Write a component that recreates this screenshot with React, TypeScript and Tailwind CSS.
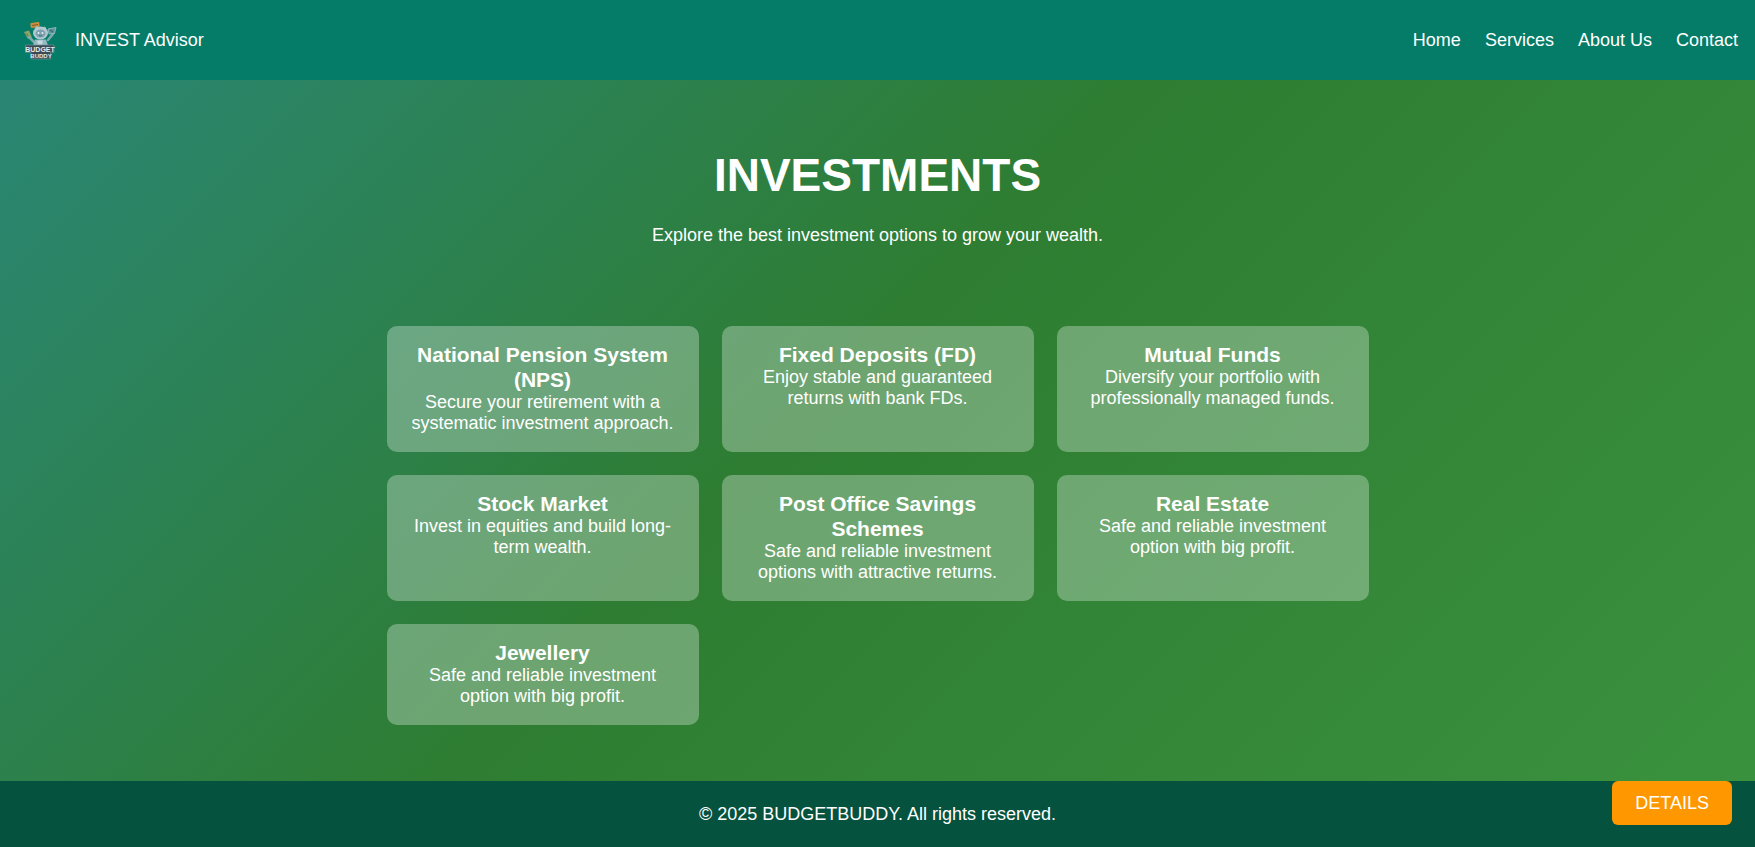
const links = ["Home", "Services", "About Us", "Contact"];

const options = [
  { title: "National Pension System (NPS)", text: "Secure your retirement with a systematic investment approach." },
  { title: "Fixed Deposits (FD)", text: "Enjoy stable and guaranteed returns with bank FDs." },
  { title: "Mutual Funds", text: "Diversify your portfolio with professionally managed funds." },
  { title: "Stock Market", text: "Invest in equities and build long-term wealth." },
  { title: "Post Office Savings Schemes", text: "Safe and reliable investment options with attractive returns." },
  { title: "Real Estate", text: "Safe and reliable investment option with big profit." },
  { title: "Jewellery", text: "Safe and reliable investment option with big profit." },
];

function Logo() {
  return (
    <svg viewBox="0 0 46 46" className="size-[46px]" role="img" aria-label="Budget Buddy">
      <rect x="13.5" y="5.5" width="9" height="5" rx="1" fill="#c98f3e" transform="rotate(-7 18 8)" />
      <path d="M15 8.5l6-1" stroke="#7d5a2d" strokeWidth="1" />
      <path d="M7 15l5-1.5 3 7-4 1.5z" fill="#8fa565" />
      <path d="M9 16.5l3 3" stroke="#4d7052" strokeWidth="1" />
      <path d="M12 20l5 5M31 23l5-6" stroke="#7fa9ae" strokeWidth="2.5" strokeLinecap="round" />
      <path d="M31 12l8-1.5-1.5 6-5.5.5z" fill="#5b929b" stroke="#9fc0c2" strokeWidth=".8" />
      <path d="M33 13l3 2" stroke="#275f68" strokeWidth="1" />
      <path d="M18 12l1.5-2.5 3 1.5M25 11l3-1 1 3" fill="#a5c4ca" stroke="#a5c4ca" />
      <ellipse cx="23.5" cy="16" rx="7.5" ry="6.5" fill="#b0cad0" />
      <ellipse cx="23.5" cy="16.5" rx="5" ry="4" fill="#7f9fb0" />
      <circle cx="21.5" cy="16" r="1" fill="#e0f1f1" />
      <circle cx="25.5" cy="16" r="1" fill="#e0f1f1" />
      <path d="M22 18.5q1.5 1 3 0" stroke="#385f70" strokeWidth=".8" fill="none" />
      <path d="M18 22.5h11l2 6H16z" fill="#94b8c1" />
      <path d="M20 23.5h6l-1 4h-4z" fill="#c5d8db" />
      <path d="M8.5 28H37v7.5h-3.5V42H14v-6.5H8.500z" fill="#3b4a55" stroke="#7d989f" strokeWidth=".6" />
      <text x="23" y="34.5" textAnchor="middle" fontFamily="Liberation Sans, sans-serif" fontWeight="700" fontSize="7" fill="#e6eced">BUDGET</text>
      <text x="24" y="41" textAnchor="middle" fontFamily="Liberation Sans, sans-serif" fontWeight="700" fontSize="6" fill="#e6eced">BUDDY</text>
    </svg>
  );
}

export default function App() {
  return (
    <div className="flex min-h-screen flex-col bg-[linear-gradient(135deg,#2a8779_0%,#2e7d32_47%,#3a923e_100%)] font-['Liberation_Sans',Arial,sans-serif] text-[18px] leading-[21px] text-white">
      <header className="flex h-20 items-center justify-between bg-[#047c68] px-[17px]">
        <div className="flex items-center gap-3">
          <Logo />
          <span>INVEST Advisor</span>
        </div>
        <nav aria-label="Main" className="flex gap-6">
          {links.map((label) => (
            <a key={label} href="#">{label}</a>
          ))}
        </nav>
      </header>

      <main className="flex grow flex-col items-center">
        <section className="px-6 pt-[69px] text-center">
          <h1 className="text-[46px] leading-[52px] font-bold">INVESTMENTS</h1>
          <p className="mt-6">Explore the best investment options to grow your wealth.</p>
        </section>
        <section
          aria-label="Investment options"
          className="grid w-full max-w-[1028px] gap-[23px] px-[23px] pt-20 pb-14 sm:grid-cols-2 lg:grid-cols-3"
        >
          {options.map(({ title, text }) => (
            <article key={title} className="rounded-[10px] bg-white/30 px-[17px] pt-4 pb-[18px] text-center">
              <h2 className="text-[21px] leading-[25px] font-bold">{title}</h2>
              <p>{text}</p>
            </article>
          ))}
        </section>
      </main>

      <footer className="bg-[#05523f] px-6 pt-[23px] pb-[22px] text-center">
        <p>© 2025 BUDGETBUDDY. All rights reserved.</p>
      </footer>

      <button type="button" className="fixed right-[23px] bottom-[22px] rounded-md bg-[#ff9800] px-[23px] py-[11px] leading-[22px]">
        DETAILS
      </button>
    </div>
  );
}
